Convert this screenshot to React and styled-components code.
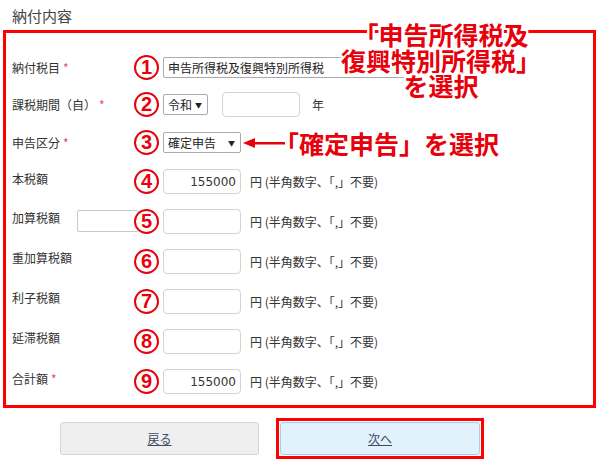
import React from "react";
import styled, { createGlobalStyle } from "styled-components";

const GlobalStyle = createGlobalStyle`
  body {
    margin: 0;
    background: #fff;
    font-family: "Noto Sans CJK JP", "Noto Sans", sans-serif;
    color: #333;
  }
`;

const rows = [
  { label: "納付税目", required: true, num: "1", kind: "tax", h: 37 },
  { label: "課税期間（自）", required: true, num: "2", kind: "period", h: 37 },
  { label: "申告区分", required: true, num: "3", kind: "class", h: 39 },
  { label: "本税額", num: "4", kind: "amount", value: "155000", h: 39, up: true },
  { label: "加算税額", num: "5", kind: "amount", extra: true, h: 40, up: true },
  { label: "重加算税額", num: "6", kind: "amount", h: 40, up: true },
  { label: "利子税額", num: "7", kind: "amount", h: 40, up: true },
  { label: "延滞税額", num: "8", kind: "amount", h: 40, up: true },
  { label: "合計額", required: true, num: "9", kind: "amount", value: "155000", h: 41, up: true },
];

const App = () => {
  return (
    <Page>
      <GlobalStyle />
      <Title>納付内容</Title>
      <Panel>
        {rows.map((r) => (
          <Row key={r.num} $h={r.h}>
            <LabelCell>
              <LabelText $up={r.up}>
                {r.label}
                {r.required && <Req>*</Req>}
              </LabelText>
              {r.extra && <ExtraBox />}
            </LabelCell>
            <Circle>{r.num}</Circle>
            {r.kind === "tax" && <FakeSelect $w={250}>申告所得税及復興特別所得税</FakeSelect>}
            {r.kind === "period" && (
              <>
                <FakeSelect $w={45}>
                  令和<Caret>▼</Caret>
                </FakeSelect>
                <TextBox $w={78} $ml={14} />
                <Unit>年</Unit>
              </>
            )}
            {r.kind === "class" && (
              <>
                <FakeSelect $w={78}>
                  確定申告<Caret>▼</Caret>
                </FakeSelect>
                <Arrow width="42" height="14" viewBox="0 0 42 14">
                  <path d="M0 7 L12 2 L12 12 Z" fill="#e8000b" />
                  <rect x="11" y="6" width="31" height="2.5" fill="#e8000b" />
                </Arrow>
                <Note>「確定申告」を選択</Note>
              </>
            )}
            {r.kind === "amount" && (
              <>
                <TextBox $w={78} defaultValue={r.value || ""} readOnly />
                <Hint>円 (半角数字、「,」不要)</Hint>
              </>
            )}
          </Row>
        ))}
      </Panel>
      <Buttons>
        <Button>戻る</Button>
        <Highlight>
          <Button $primary>次へ</Button>
        </Highlight>
      </Buttons>
      <TopNote>
        <NoteLine>「申告所得税及</NoteLine>
        <NoteLine>復興特別所得税」</NoteLine>
        <NoteLine>を選択</NoteLine>
      </TopNote>
    </Page>
  );
};

const Page = styled.div`
  position: relative;
  width: 600px;
  height: 466px;
  overflow: hidden;
`;

const Title = styled.div`
  height: 30px;
  padding-left: 12px;
  font-size: 15px;
  line-height: 30px;
  color: #444;
  box-sizing: border-box;
  padding-top: 1px;
`;

const Panel = styled.div`
  margin-left: 3px;
  width: 593px;
  height: 378px;
  box-sizing: border-box;
  border: 3px solid #f00;
  padding: 16px 0 0 6px;
`;

const Row = styled.div`
  display: flex;
  align-items: center;
  height: ${(p) => p.$h}px;
`;

const LabelCell = styled.div`
  width: 121px;
  flex: none;
  display: flex;
  align-items: center;
  align-self: stretch;
`;

const LabelText = styled.span`
  font-size: 12px;
  color: #333;
  white-space: nowrap;
  margin-bottom: ${(p) => (p.$up ? "7px" : "0")};
`;

const Req = styled.span`
  color: #e94a5a;
  margin-left: 3px;
`;

const ExtraBox = styled.div`
  margin-left: auto;
  margin-right: -6px;
  width: 62px;
  height: 22px;
  box-sizing: border-box;
  border: 1px solid #c8c8c8;
  border-radius: 2px;
  background: #fff;
`;

const Circle = styled.span`
  position: relative;
  z-index: 1;
  flex: none;
  width: 25px;
  height: 25px;
  margin: 0 2px 0 1px;
  box-sizing: border-box;
  border: 2px solid #e8000b;
  border-radius: 50%;
  background: #fff;
  color: #e8000b;
  font-family: "Liberation Sans", Arial, sans-serif;
  font-weight: bold;
  font-size: 20px;
  line-height: 21px;
  text-align: center;
`;

const FakeSelect = styled.div`
  display: flex;
  align-items: center;
  justify-content: space-between;
  width: ${(p) => p.$w}px;
  height: 21px;
  box-sizing: border-box;
  margin-left: 2px;
  padding: 0 5px 0 4px;
  border: 1px solid #aaa;
  border-radius: 2px;
  background: #fff;
  font-size: 12px;
  color: #222;
  white-space: nowrap;
  overflow: hidden;
`;

const Caret = styled.span`
  font-size: 7px;
  color: #222;
`;

const TextBox = styled.input`
  width: ${(p) => p.$w}px;
  height: 25px;
  box-sizing: border-box;
  margin: 0 0 0 ${(p) => p.$ml || 2}px;
  padding: 0 4px;
  border: 1px solid #d2d2d2;
  border-radius: 4px;
  background: #fff;
  font-family: "DejaVu Sans", sans-serif;
  font-size: 12px;
  color: #333;
  text-align: right;
  outline: none;
`;

const Unit = styled.span`
  margin-left: 12px;
  font-size: 12px;
  color: #333;
`;

const Hint = styled.span`
  margin-left: 9px;
  font-size: 12px;
  color: #333;
  white-space: nowrap;
`;

const Arrow = styled.svg`
  flex: none;
  margin-left: 2px;
`;

const Note = styled.span`
  margin-left: -11px;
  font-size: 25px;
  font-weight: bold;
  color: #e8000b;
  white-space: nowrap;
`;

const TopNote = styled.div`
  position: absolute;
  left: 331px;
  top: 22px;
  width: 220px;
  display: flex;
  flex-direction: column;
  align-items: center;
  font-size: 25px;
  font-weight: bold;
  color: #e8000b;
  white-space: nowrap;
  text-shadow: 2px 0 0 #fff, -2px 0 0 #fff, 0 2px 0 #fff, 0 -2px 0 #fff,
    2px 2px 0 #fff, -2px -2px 0 #fff, 2px -2px 0 #fff, -2px 2px 0 #fff;
`;

const NoteLine = styled.div`
  height: 25.5px;
  line-height: 25px;
`;

const Buttons = styled.div`
  display: flex;
  align-items: center;
  gap: 17px;
  padding-left: 60px;
  margin-top: 10px;
`;

const Highlight = styled.div`
  padding: 1px;
  border: 3px solid #f00;
`;

const Button = styled.div`
  width: ${(p) => (p.$primary ? 200 : 199)}px;
  height: 33px;
  box-sizing: border-box;
  display: flex;
  align-items: center;
  justify-content: center;
  border: 1px solid ${(p) => (p.$primary ? "#a9cde6" : "#d4d4d4")};
  border-radius: 3px;
  background: ${(p) => (p.$primary ? "#e2f2fc" : "#efefef")};
  font-size: 12px;
  color: #3a4a66;
  text-decoration: underline;
  cursor: pointer;
`;

export default App;
